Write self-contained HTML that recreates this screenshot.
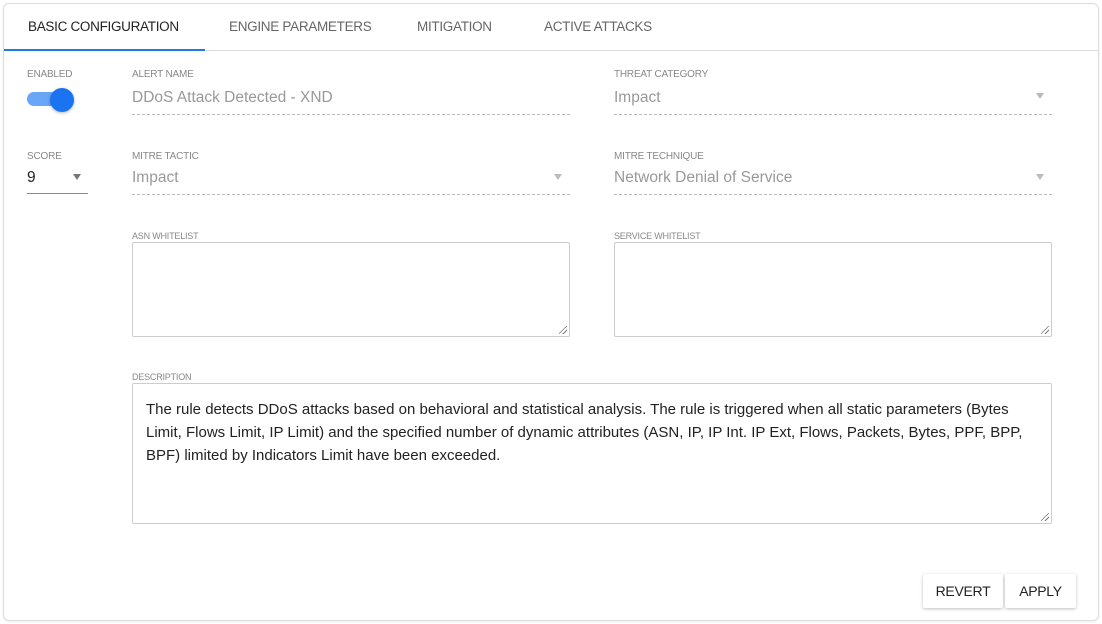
<!DOCTYPE html>
<html><head><style>
*{box-sizing:border-box;margin:0;padding:0}
body{width:1102px;height:624px;background:#fff;font-family:"Liberation Sans",sans-serif;position:relative;overflow:hidden}
.card{position:absolute;left:3px;top:3px;width:1096px;height:618px;border:1px solid #ddd;border-radius:6px;box-shadow:0 1px 2px rgba(0,0,0,.08)}
.tabs{position:absolute;left:4px;top:4px;width:1094px;height:47px;border-bottom:1px solid #ddd}
.tab{position:absolute;top:19px;font-size:13.5px;color:#666;letter-spacing:-.3px}
.ul{position:absolute;left:4px;top:49px;width:201px;height:2px;background:#1e7be0}
.lbl{position:absolute;font-size:10px;color:#888;letter-spacing:-.2px}
.val{position:absolute;font-size:15.5px;color:#999}
.dash{position:absolute;height:0;border-top:1px dashed #bbb}
.arr{position:absolute;width:0;height:0;border-left:4px solid transparent;border-right:4px solid transparent;border-top:6px solid #999}
.ta{position:absolute;border:1px solid #ccc;border-radius:2px}
.rz{position:absolute;right:2px;bottom:2px;width:8px;height:8px;background:linear-gradient(135deg,transparent 45%,#777 46%,#777 52%,transparent 53%,transparent 70%,#777 71%,#777 78%,transparent 79%)}
.btn{position:absolute;top:574px;height:34px;background:#fff;box-shadow:0 1px 3px rgba(0,0,0,.25);font-size:14px;color:#222;text-align:center;line-height:34px;border-radius:2px;letter-spacing:-.3px}
</style></head><body>
<div class="card"></div>
<div class="tabs"></div>
<div class="tab" style="left:28px;color:#222">BASIC CONFIGURATION</div>
<div class="tab" style="left:229px">ENGINE PARAMETERS</div>
<div class="tab" style="left:417px">MITIGATION</div>
<div class="tab" style="left:544px">ACTIVE ATTACKS</div>
<div class="ul"></div>

<div class="lbl" style="left:27px;top:69px">ENABLED</div>
<div style="position:absolute;left:27px;top:92px;width:40px;height:14px;border-radius:7px;background:#6aa6f8"></div>
<div style="position:absolute;left:50px;top:88px;width:24px;height:24px;border-radius:50%;background:#1a73f0;box-shadow:0 1px 3px rgba(0,0,0,.3)"></div>

<div class="lbl" style="left:27px;top:151px">SCORE</div>
<div class="val" style="left:27px;top:169px;color:#222">9</div>
<div class="arr" style="left:73px;top:174px;border-top-color:#777"></div>
<div style="position:absolute;left:27px;top:193px;width:61px;border-top:1px solid #888"></div>

<div class="lbl" style="left:132px;top:69px">ALERT NAME</div>
<div class="val" style="left:132px;top:89px">DDoS Attack Detected - XND</div>
<div class="dash" style="left:132px;top:114px;width:438px"></div>

<div class="lbl" style="left:614px;top:69px">THREAT CATEGORY</div>
<div class="val" style="left:614px;top:89px">Impact</div>
<div class="arr" style="left:1036px;top:93px;border-top-color:#bbb"></div>
<div class="dash" style="left:614px;top:114px;width:438px"></div>

<div class="lbl" style="left:132px;top:151px">MITRE TACTIC</div>
<div class="val" style="left:132px;top:169px">Impact</div>
<div class="arr" style="left:554px;top:174px;border-top-color:#bbb"></div>
<div class="dash" style="left:132px;top:194px;width:438px"></div>

<div class="lbl" style="left:614px;top:151px">MITRE TECHNIQUE</div>
<div class="val" style="left:614px;top:169px">Network Denial of Service</div>
<div class="arr" style="left:1036px;top:174px;border-top-color:#bbb"></div>
<div class="dash" style="left:614px;top:194px;width:438px"></div>

<div class="lbl" style="left:132px;top:231px;font-size:9px">ASN WHITELIST</div>
<div class="ta" style="left:132px;top:242px;width:438px;height:95px"><div class="rz"></div></div>
<div class="lbl" style="left:614px;top:231px;font-size:9px">SERVICE WHITELIST</div>
<div class="ta" style="left:614px;top:242px;width:438px;height:95px"><div class="rz"></div></div>

<div class="lbl" style="left:132px;top:372px;font-size:9px">DESCRIPTION</div>
<div class="ta" style="left:132px;top:383px;width:920px;height:141px"><div class="rz"></div>
<div style="position:absolute;left:13px;top:14px;width:885px;font-size:15px;line-height:23px;color:#222">The rule detects DDoS attacks based on behavioral and statistical analysis. The rule is triggered when all static parameters (Bytes Limit, Flows Limit, IP Limit) and the specified number of dynamic attributes (ASN, IP, IP Int. IP Ext, Flows, Packets, Bytes, PPF, BPP, BPF) limited by Indicators Limit have been exceeded.</div></div>

<div class="btn" style="left:923px;width:80px">REVERT</div>
<div class="btn" style="left:1005px;width:71px">APPLY</div>
</body></html>
